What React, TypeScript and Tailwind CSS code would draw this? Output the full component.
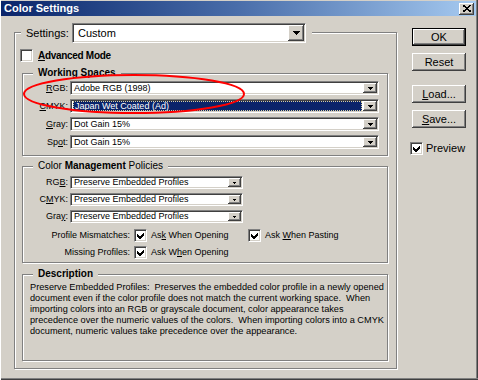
import React from "react";

const sunken =
  "border border-t-[#808080] border-l-[#808080] border-r-white border-b-white shadow-[inset_1px_1px_0_#404040,inset_-1px_-1px_0_#d4d0c8]";
const raised =
  "bg-[#d4d0c8] shadow-[inset_-1px_-1px_0_#404040,inset_1px_1px_0_#ffffff,inset_-2px_-2px_0_#808080]";
const etched =
  "border border-[#808080] shadow-[inset_1px_1px_0_#ffffff,1px_1px_0_#ffffff]";

function Arrow({ w, h }: { w: number; h: number }) {
  return (
    <svg width={w} height={h} viewBox={`0 0 ${w} ${h}`} shapeRendering="crispEdges">
      <path d={`M0 0H${w}L${w / 2} ${h}Z`} fill="#000" />
    </svg>
  );
}

function Check({ checked }: { checked?: boolean }) {
  return (
    <div className={`w-[13px] h-[13px] shrink-0 bg-white flex items-center justify-center ${sunken}`}>
      {checked && (
        <svg width="7" height="7" viewBox="0 0 7 7" shapeRendering="crispEdges">
          <polygon points="0,2 2.5,4.5 7,0 7,3 2.5,7.5 0,5" fill="#000" />
        </svg>
      )}
    </div>
  );
}

function Combo({
  w,
  h,
  text,
  selected,
  size,
  btnW,
  aw,
  ah,
}: {
  w: number;
  h: number;
  text: string;
  selected?: boolean;
  size: "big" | "small";
  btnW: number;
  aw: number;
  ah: number;
}) {
  return (
    <div className={`shrink-0 bg-white flex items-stretch p-px ${sunken}`} style={{ width: w, height: h }}>
      <div className="flex-1 min-w-0 flex items-center px-[1px]">
        {selected ? (
          <div className="h-full w-full bg-[#0a246a] outline outline-1 outline-dotted outline-[#d8d0a0] -outline-offset-1 flex items-center pl-[2px] text-white text-[9px] leading-none whitespace-nowrap">
            {text}
          </div>
        ) : (
          <span
            className={`${size === "big" ? "text-[11px] pl-[3px]" : "text-[9px] pl-[1px]"} leading-none whitespace-nowrap text-black`}
          >
            {text}
          </span>
        )}
      </div>
      <div className={`flex items-center justify-center ${raised}`} style={{ width: btnW }}>
        <Arrow w={aw} h={ah} />
      </div>
    </div>
  );
}

function Btn({ children, def }: { children: React.ReactNode; def?: boolean }) {
  if (def)
    return (
      <div className="ml-[2px] w-[54px] h-[18px] border border-black flex">
        <div className={`flex-1 flex items-center justify-center text-[11px] leading-none ${raised}`}>{children}</div>
      </div>
    );
  return (
    <div className={`ml-[2px] w-[54px] h-[18px] flex items-center justify-center text-[11px] leading-none ${raised}`}>
      {children}
    </div>
  );
}

function Legend({ children }: { children: React.ReactNode }) {
  return (
    <div className="self-start ml-[10px] -mt-[7px] h-[12px] px-[5px] bg-[#d4d0c8] text-[10px] font-bold leading-[12px] whitespace-nowrap">
      {children}
    </div>
  );
}

export default function App() {
  return (
    <div className="relative w-[478px] h-[380px] overflow-hidden bg-[#d4d0c8] text-black font-['Liberation_Sans',Arial,sans-serif] shadow-[inset_1px_0_0_#ffffff,inset_0_-1px_0_#404040,inset_0_-2px_0_#808080,inset_-1px_0_0_#404040,inset_-2px_0_0_#808080]">
      {/* title bar */}
      <div className="ml-[1px] mr-[2px] mt-[1px] h-[15px] flex items-center justify-between pl-[3px] pr-[2px] bg-gradient-to-r from-[#0a246a] via-[#4a6eaa] to-[#a6caf0]">
        <span className="text-white font-bold text-[11px] leading-none">Color Settings</span>
        <div className={`w-[15px] h-[12px] flex items-center justify-center ${raised}`}>
          <svg width="8" height="7" viewBox="0 0 8 7" shapeRendering="crispEdges">
            <path d="M0 0L8 7M8 0L0 7" stroke="#000" strokeWidth="1.6" />
          </svg>
        </div>
      </div>

      <div className="flex pl-[14px] pt-[12px]">
        {/* outer group */}
        <div className={`mt-[4px] w-[383px] h-[337px] flex flex-col ${etched}`}>
          <div className="self-start ml-[6px] -mt-[10px] h-[20px] pl-[5px] pr-[6px] bg-[#d4d0c8] flex items-center">
            <span className="text-[11px] w-[46px] leading-none">Settings:</span>
            <Combo w={234} h={20} text="Custom" size="big" btnW={16} aw={7} ah={4} />
          </div>
          <div className="mt-[6px] ml-[5px] h-[13px] flex items-center">
            <Check />
            <span className="ml-[5px] text-[10px] font-bold leading-none tracking-[-0.3px]">
              <u>A</u>dvanced Mode
            </span>
          </div>

          {/* Working Spaces */}
          <div className={`mt-[11px] ml-[7px] w-[366px] h-[83px] flex flex-col ${etched}`}>
            <Legend>Working Spaces</Legend>
            <div className="mt-[2px] flex flex-col gap-[4px]">
              {[
                { l: <><u>R</u>GB:</>, t: "Adobe RGB (1998)" },
                { l: <><u>C</u>MYK:</>, t: "Japan Wet Coated (Ad)", s: true },
                { l: <><u>G</u>ray:</>, t: "Dot Gain 15%" },
                { l: <>Sp<u>o</u>t:</>, t: "Dot Gain 15%" },
              ].map((r, i) => (
                <div key={i} className="h-[14px] flex items-center">
                  <span className="w-[47px] pr-[2px] text-right text-[9px] leading-none">{r.l}</span>
                  <Combo w={309} h={14} text={r.t} selected={r.s} size="small" btnW={14} aw={5} ah={3} />
                </div>
              ))}
            </div>
          </div>

          {/* Color Management Policies */}
          <div className={`mt-[10px] ml-[7px] w-[366px] h-[97px] flex flex-col ${etched}`}>
            <Legend>
              <span className="font-normal">Color</span> Management <span className="font-normal">Policies</span>
            </Legend>
            <div className="mt-[4px] flex flex-col gap-[4px]">
              {[
                { l: <>RG<u>B</u>:</> },
                { l: <>C<u>M</u>YK:</> },
                { l: <>Gra<u>y</u>:</> },
              ].map((r, i) => (
                <div key={i} className="h-[13px] flex items-center">
                  <span className="w-[47px] pr-[2px] text-right text-[9px] leading-none">{r.l}</span>
                  <Combo w={173} h={13} text="Preserve Embedded Profiles" size="small" btnW={13} aw={3} ah={2} />
                </div>
              ))}
            </div>
            <div className="mt-[6px] h-[13px] flex items-center text-[9px] leading-none">
              <span className="w-[111px] pr-[4px] text-right">Profile Mismatches:</span>
              <Check checked />
              <span className="ml-[4px] w-[97px]">
                As<u>k</u> When Opening
              </span>
              <Check checked />
              <span className="ml-[4px]">
                Ask <u>W</u>hen Pasting
              </span>
            </div>
            <div className="mt-[4px] h-[13px] flex items-center text-[9px] leading-none">
              <span className="w-[111px] pr-[4px] text-right">Missing Profiles:</span>
              <Check checked />
              <span className="ml-[4px]">
                Ask W<u>h</u>en Opening
              </span>
            </div>
          </div>

          {/* Description */}
          <div className={`mt-[11px] ml-[7px] w-[366px] h-[87px] flex flex-col ${etched}`}>
            <Legend>Description</Legend>
            <div className="mt-[2px] pl-[7px] text-[9.2px] leading-[11px] whitespace-pre">
              <div>Preserve Embedded Profiles:  Preserves the embedded color profile in a newly opened</div>
              <div>document even if the color profile does not match the current working space.  When</div>
              <div>importing colors into an RGB or grayscale document, color appearance takes</div>
              <div>precedence over the numeric values of the colors.  When importing colors into a CMYK</div>
              <div>document, numeric values take precedence over the appearance.</div>
            </div>
          </div>
        </div>

        {/* right buttons */}
        <div className="ml-[13px] flex flex-col">
          <Btn def>OK</Btn>
          <div className="mt-[7px]">
            <Btn>Reset</Btn>
          </div>
          <div className="mt-[14px]">
            <Btn>
              <u>L</u>oad...
            </Btn>
          </div>
          <div className="mt-[7px]">
            <Btn>
              <u>S</u>ave...
            </Btn>
          </div>
          <div className="mt-[14px] h-[13px] flex items-center">
            <Check checked />
            <span className="ml-[3px] text-[11px] leading-none">Preview</span>
          </div>
        </div>
      </div>

      {/* red annotation ellipse */}
      <svg className="absolute left-0 top-0 pointer-events-none" width="478" height="380">
        <ellipse cx="134" cy="94" rx="110" ry="19" fill="none" stroke="#ff0000" strokeWidth="2" />
      </svg>
    </div>
  );
}
